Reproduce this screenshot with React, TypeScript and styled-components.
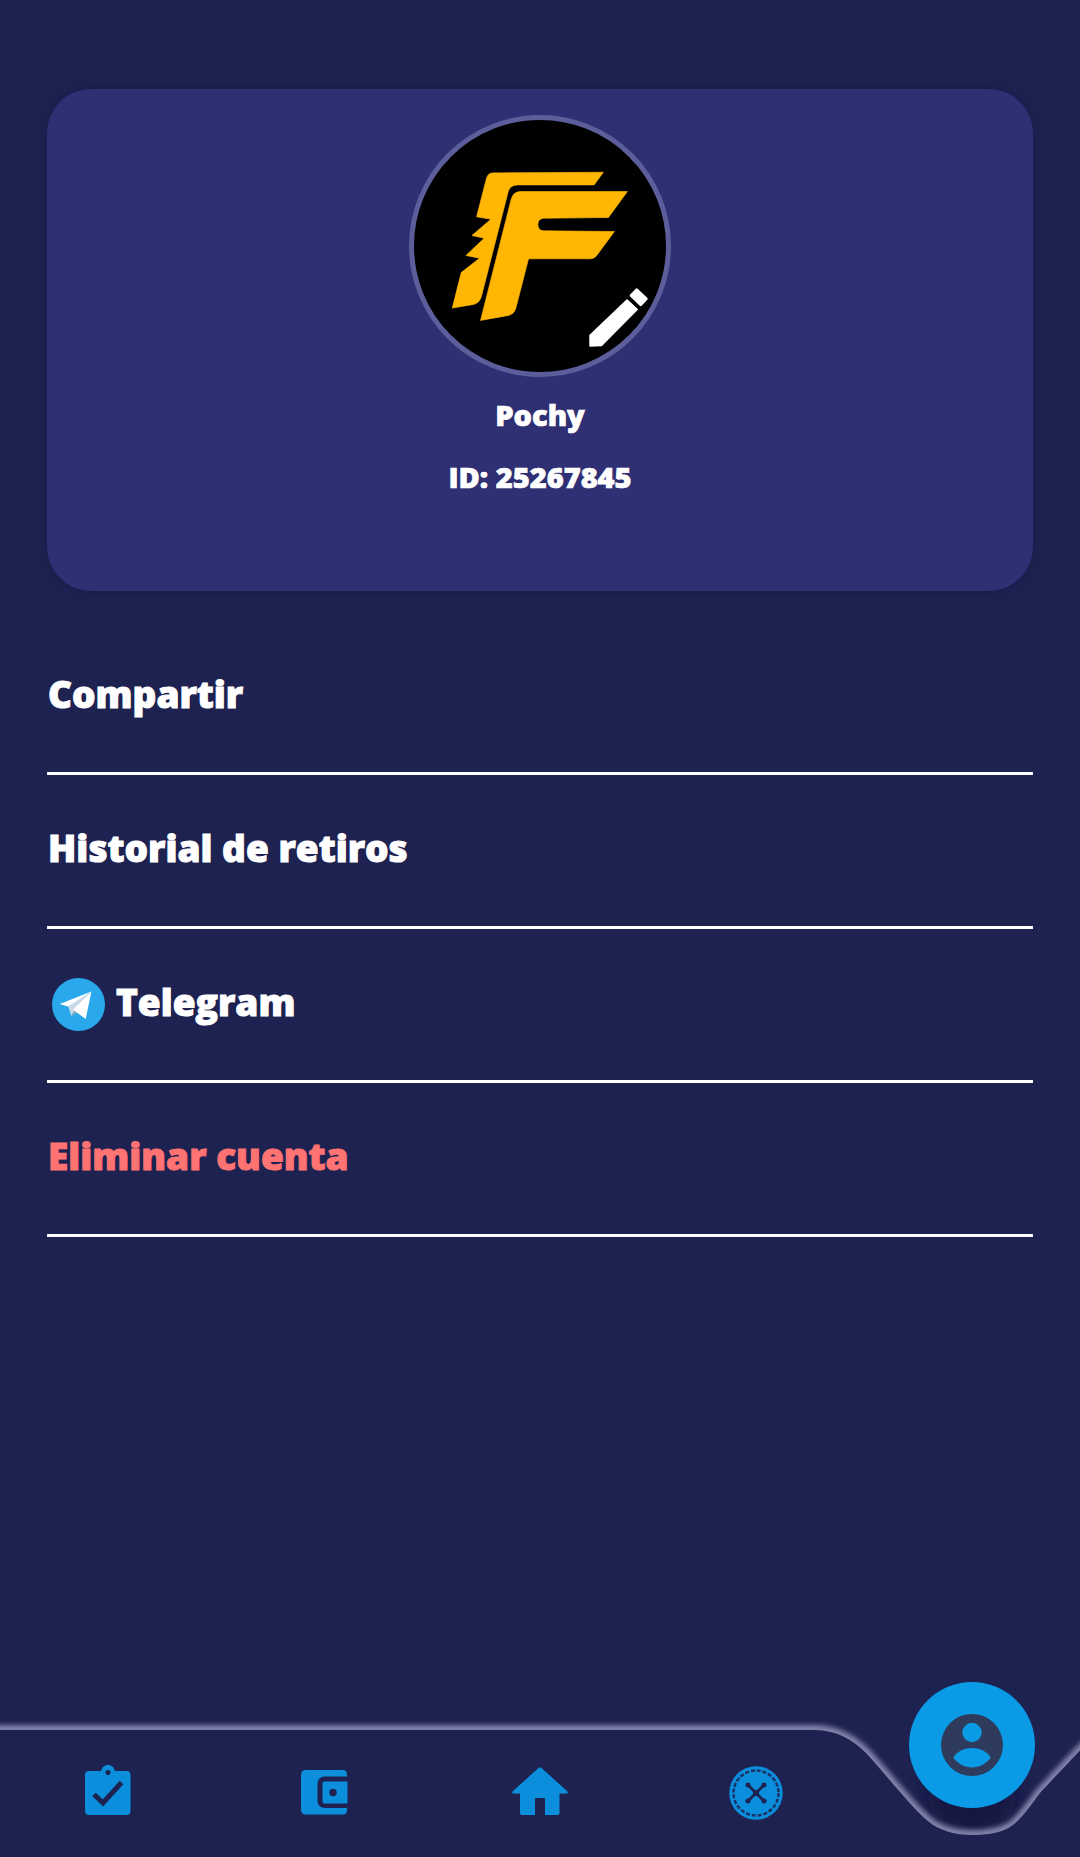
import { ReactNode } from 'react';
import styled, { createGlobalStyle } from 'styled-components';

const BG = '#1e2251';
const ACCENT = '#0b8fdc';

const GlobalStyle = createGlobalStyle`
  html, body {
    margin: 0;
    padding: 0;
    background: ${BG};
  }
  * {
    box-sizing: border-box;
  }
`;

const Page = styled.div`
  display: flex;
  flex-direction: column;
  height: 1857px;
  font-family: 'Open Sans', 'Liberation Sans', sans-serif;
  color: #fff;
  overflow: hidden;
`;

const Main = styled.main`
  flex: 1;
  padding: 89px 47px 0;
`;

const ProfileCard = styled.section`
  display: flex;
  flex-direction: column;
  align-items: center;
  height: 502px;
  padding-top: 26px;
  border-radius: 44px;
  background: #2f2f73;
  box-shadow: 0 0 8px rgba(15, 15, 50, 0.35);
`;

const Avatar = styled.div`
  position: relative;
  width: 262px;
  height: 262px;
  border-radius: 50%;
  background: #000;
  border: 5px solid #5b5e9a;
`;

const AvatarArt = styled.svg`
  position: absolute;
  top: -5px;
  left: -5px;
  width: 262px;
  height: 262px;
`;

const ProfileName = styled.div<{ $top: number }>`
  margin-top: ${(props) => props.$top}px;
  font-size: 29px;
  font-weight: 800;
  line-height: 36px;
  -webkit-text-stroke: 0.7px #fff;
`;

const MenuList = styled.nav`
  display: flex;
  flex-direction: column;
  margin-top: 30px;
`;

const MenuRow = styled.div`
  display: flex;
  align-items: center;
  gap: 11px;
  height: 154px;
  padding: 0 0 6px 1px;
  border-bottom: 3px solid #fff;
`;

const MenuLabel = styled.span<{ $danger?: boolean }>`
  font-size: 37px;
  font-weight: 800;
  color: ${(props) => (props.$danger ? '#ff7373' : '#fff')};
  -webkit-text-stroke: 1px ${(props) => (props.$danger ? '#ff7373' : '#fff')};
`;

const TelegramBadge = styled.svg`
  flex: none;
  width: 53px;
  height: 53px;
  margin: 5px 0 0 4px;
`;

const BottomBar = styled.footer`
  position: relative;
  display: grid;
  grid-template-columns: repeat(4, 216px);
  align-items: center;
  height: 136px;
  padding-top: 8px;
  border-bottom: 2px solid #0d0f28;
`;

const BarCurve = styled.svg`
  position: absolute;
  inset: 0;
  width: 1080px;
  height: 136px;
`;

const BarItem = styled.div`
  position: relative;
  display: flex;
  justify-content: center;
  align-items: center;
`;

const BarIcon = styled.svg`
  width: 56px;
  height: 56px;
  color: ${ACCENT};
`;

const ProfileFab = styled.div`
  position: absolute;
  top: -39px;
  right: 45px;
  display: flex;
  justify-content: center;
  align-items: center;
  width: 126px;
  height: 126px;
  border-radius: 50%;
  background: #0a9ae6;
`;

const FabIcon = styled.svg`
  width: 62px;
  height: 62px;
`;

const LogoArt = () => (
  <AvatarArt viewBox="87 75 785 787">
    <path
      fill="#ffb703"
      stroke="#ffb703"
      strokeWidth="2"
      strokeLinejoin="round"
      d="M336 249 L670 247 L642 285 L412 285 Q390 285 384 305 L303 622 Q297 640 280 644 L216 655 L243 548 L298 505 L257 497 L312 445 L275 437 L332 388 L289 381 L318 268 Q322 250 336 249 Z"
    />
    <path
      fill="#ffb703"
      stroke="#ffb703"
      strokeWidth="2"
      strokeLinejoin="round"
      d="M420 305 L742 305 L685 383 L490 385 Q473 387 473 404 Q473 421 490 423 L703 425 L650 497 Q643 507 630 507 L445 507 L407 655 Q402 673 385 677 L301 692 L393 328 Q399 306 420 305 Z"
    />
    <path
      fill="#fff"
      stroke="#fff"
      strokeWidth="5"
      strokeLinejoin="round"
      d="M630 737 L741 631 L771 659 L664 767 L630 769 Z"
    />
    <path
      fill="#fff"
      stroke="#fff"
      strokeWidth="8"
      strokeLinejoin="round"
      d="M753 617 L770 600 L799 627 L782 645 Z"
    />
  </AvatarArt>
);

const TelegramIcon = () => (
  <TelegramBadge viewBox="0 0 53 53">
    <circle cx="26.5" cy="26.5" r="26.5" fill="#29a9eb" />
    <path fill="#c8daea" d="M16 28 L19.500 38 L23 31 L39 13.500 Z" />
    <path fill="#a9a9a9" d="M19.500 38 L26 34 L22.500 31.500 Z" opacity="0.75" />
    <path fill="#fff" d="M7.700 26 L39.400 13.400 L33.700 41 L21 31.700 L39.400 13.400 L16 28.400 Z" />
  </TelegramBadge>
);

const TasksIcon = () => (
  <BarIcon viewBox="0 0 56 56">
    <path
      fill="currentColor"
      d="M9 7 H21 C22 3 25 1 28 1 C31 1 34 3 35 7 H46.500 Q50.500 7 50.500 11 V47 Q50.500 51 46.500 51 H9 Q5 51 5 47 V11 Q5 7 9 7 Z"
    />
    <circle cx="28" cy="8.500" r="2.500" fill={BG} />
    <path fill="none" stroke={BG} strokeWidth="5" d="M14 30.500 L23 39 L41.500 18.500" />
  </BarIcon>
);

const WalletIcon = () => (
  <BarIcon viewBox="0 0 56 56">
    <path
      fill="currentColor"
      d="M10 6 H46.500 Q51 6 51 10.500 V12.500 H29.500 Q21.500 12.500 21.500 20.500 V36.500 Q21.500 44 29.500 44 H51 V46 Q51 50.500 46.500 50.500 H10 Q5 50.500 5 45.500 V11 Q5 6 10 6 Z"
    />
    <path fill="currentColor" d="M28.500 17.500 H51.500 V39.500 H28.500 Q26.500 39.500 26.500 37.500 V19.500 Q26.500 17.500 28.500 17.500 Z" />
    <circle cx="37" cy="28.500" r="3.700" fill={BG} />
  </BarIcon>
);

const HomeIcon = () => (
  <BarIcon viewBox="0 0 56 56">
    <path
      fill="currentColor"
      d="M26.500 4 Q28 2.500 29.500 4 L55.500 27.500 Q56.500 29.500 54.500 29.500 H47.500 V49 Q47.500 51 45.500 51 H33 V34 H23 V51 H10 Q8 51 8 49 V29.500 H1.500 Q-0.500 29.500 0.500 27.500 Z"
    />
  </BarIcon>
);

const RouletteIcon = () => (
  <BarIcon viewBox="0 0 56 56">
    <circle cx="28" cy="29" r="26.700" fill="currentColor" />
    <circle cx="28" cy="29" r="22.500" fill="none" stroke={BG} strokeOpacity="0.85" strokeWidth="2.500" strokeDasharray="4.100 1.790" />
    <path fill="none" stroke={BG} strokeWidth="2.800" d="M20 21 L36 37 M36 21 L20 37" />
    <circle cx="28" cy="29" r="3" fill={BG} />
    <circle cx="20" cy="21" r="2.500" fill={BG} />
    <circle cx="36" cy="21" r="2.500" fill={BG} />
    <circle cx="20" cy="37" r="2.500" fill={BG} />
    <circle cx="36" cy="37" r="2.500" fill={BG} />
  </BarIcon>
);

const UserIcon = () => (
  <FabIcon viewBox="0 0 62 62">
    <circle cx="31" cy="31" r="31" fill="#2f3b5c" />
    <circle cx="31" cy="18.500" r="9.700" fill="#0a9ae6" />
    <path
      fill="#0a9ae6"
      d="M12.300 43.500 C16 37 24 34 31 34 C38 34 46 37 49.700 43.500 C46 49.500 38 53.500 31 53.500 C24 53.500 16 49.500 12.300 43.500 Z"
    />
  </FabIcon>
);

const WAVE =
  'M-10 9 L815 9 C835 9 852 18 866 32 C880 47 890 60 900 71 C912 85 922 96 933 104 C945 111 958 114 972 114 C988 114 1002 112 1013 104 C1023 96 1031 84 1040 72 C1052 59 1068 42 1090 19';

const BarBackdrop = () => (
  <BarCurve viewBox="0 0 1080 136">
    <defs>
      <filter id="glow" x="-5%" y="-40%" width="110%" height="180%">
        <feGaussianBlur stdDeviation="2.500" />
      </filter>
      <filter id="notchShade" x="-30%" y="-30%" width="160%" height="160%">
        <feGaussianBlur stdDeviation="10" />
      </filter>
    </defs>
    <circle cx="972" cy="72" r="44" fill="#0d0f30" opacity="0.5" filter="url(#notchShade)" />
    <path d={WAVE} fill="none" stroke="#8383ac" strokeWidth="10" filter="url(#glow)" />
    <path d="M1084 10 L1084 20" fill="none" stroke="#8383ac" strokeWidth="10" strokeLinecap="round" filter="url(#glow)" />
    <path d={`${WAVE} L1090 140 L-10 140 Z`} fill={BG} />
  </BarCurve>
);

const MenuEntry = ({ icon, danger, children }: { icon?: ReactNode; danger?: boolean; children: string }) => (
  <MenuRow>
    {icon}
    <MenuLabel $danger={danger}>{children}</MenuLabel>
  </MenuRow>
);

export default function App() {
  return (
    <Page>
      <GlobalStyle />
      <Main>
        <ProfileCard>
          <Avatar>
            <LogoArt />
          </Avatar>
          <ProfileName $top={20}>Pochy</ProfileName>
          <ProfileName $top={26}>ID: 25267845</ProfileName>
        </ProfileCard>
        <MenuList>
          <MenuEntry>Compartir</MenuEntry>
          <MenuEntry>Historial de retiros</MenuEntry>
          <MenuEntry icon={<TelegramIcon />}>Telegram</MenuEntry>
          <MenuEntry danger>Eliminar cuenta</MenuEntry>
        </MenuList>
      </Main>
      <BottomBar>
        <BarBackdrop />
        <BarItem>
          <TasksIcon />
        </BarItem>
        <BarItem>
          <WalletIcon />
        </BarItem>
        <BarItem>
          <HomeIcon />
        </BarItem>
        <BarItem>
          <RouletteIcon />
        </BarItem>
        <ProfileFab>
          <UserIcon />
        </ProfileFab>
      </BottomBar>
    </Page>
  );
}
